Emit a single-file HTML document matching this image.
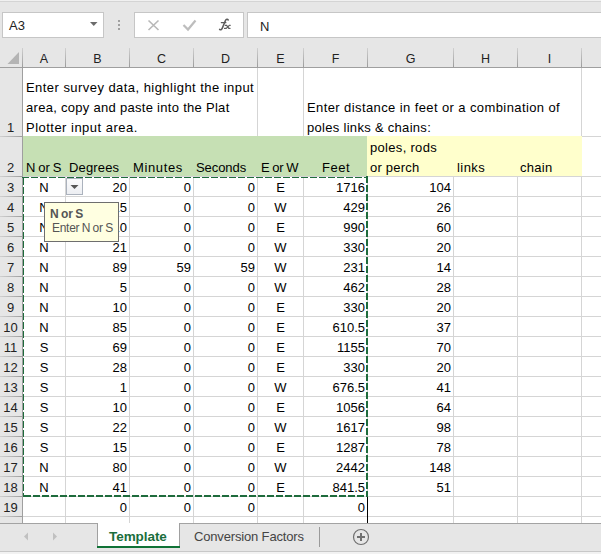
<!DOCTYPE html>
<html><head><meta charset="utf-8"><style>
html,body{margin:0;padding:0;}
body{width:601px;height:554px;position:relative;overflow:hidden;background:#e6e6e6;font-family:"Liberation Sans", sans-serif;}
body>div,body>svg{position:absolute;}
.t{white-space:nowrap;line-height:20px;font-family:"Liberation Sans", sans-serif;}
</style></head><body>
<div style="left:0px;top:0px;width:601px;height:1px;background:#f0f0f0;"></div>
<div style="left:0px;top:1px;width:601px;height:1px;background:#d4d4d4;"></div>
<div style="left:2px;top:12px;width:100px;height:24px;border:1px solid #c6c6c6;background:#fff"></div>
<div class="t" style="left:9px;top:16px;font-size:13px;color:#222;">A3</div>
<svg style="left:80px;top:15px" width="25" height="15"><path d="M10 7 L17.5 7 L13.75 11 Z" fill="#6b6b6b"/></svg>
<div style="left:118px;top:20px;width:2px;height:2px;background:#a0a0a0;"></div>
<div style="left:118px;top:24px;width:2px;height:2px;background:#a0a0a0;"></div>
<div style="left:118px;top:28px;width:2px;height:2px;background:#a0a0a0;"></div>
<div style="left:134px;top:12px;width:108px;height:24px;border:1px solid #c6c6c6;background:#fff"></div>
<svg style="left:0;top:0" width="601" height="60"><path d="M148.5 20.5 L158.5 30 M158.5 20.5 L148.5 30" stroke="#b8b8b8" stroke-width="1.6" fill="none"/><path d="M183.5 25 L188 29.5 L195.5 20.5" stroke="#bdbdbd" stroke-width="2.2" fill="none"/></svg>
<svg style="left:0;top:0" width="601" height="60"><g stroke="#5c5c5c" fill="none" stroke-linecap="round"><path d="M228.2 20 C227.6 19 226.2 19.1 225.4 20.6 L222.2 28.4 C221.6 29.8 220.6 30.1 219.6 29.4" stroke-width="1.5"/><path d="M221.3 22.6 L225.9 22.6" stroke-width="1.2"/><path d="M225.3 25.4 L226.6 25.4 L228.8 28.4 L230 28.4" stroke-width="1.2"/><path d="M230.4 25.3 L229.4 25.3 L226.2 28.4 L224.5 28.4" stroke-width="1.1"/></g></svg>
<div style="left:247px;top:12px;width:400px;height:24px;border:1px solid #c6c6c6;background:#fff"></div>
<div class="t" style="left:260px;top:17px;font-size:13px;color:#222;">N</div>
<div style="left:23px;top:68px;width:578px;height:455px;background:#fff;"></div>
<div style="left:22px;top:48px;width:1px;height:19px;background:linear-gradient(#d0d0d0,#9c9c9c)"></div>
<div style="left:65px;top:48px;width:1px;height:19px;background:linear-gradient(#d0d0d0,#9c9c9c)"></div>
<div style="left:129px;top:48px;width:1px;height:19px;background:linear-gradient(#d0d0d0,#9c9c9c)"></div>
<div style="left:193px;top:48px;width:1px;height:19px;background:linear-gradient(#d0d0d0,#9c9c9c)"></div>
<div style="left:257px;top:48px;width:1px;height:19px;background:linear-gradient(#d0d0d0,#9c9c9c)"></div>
<div style="left:303px;top:48px;width:1px;height:19px;background:linear-gradient(#d0d0d0,#9c9c9c)"></div>
<div style="left:367px;top:48px;width:1px;height:19px;background:linear-gradient(#d0d0d0,#9c9c9c)"></div>
<div style="left:453px;top:48px;width:1px;height:19px;background:linear-gradient(#d0d0d0,#9c9c9c)"></div>
<div style="left:517px;top:48px;width:1px;height:19px;background:linear-gradient(#d0d0d0,#9c9c9c)"></div>
<div style="left:581px;top:48px;width:1px;height:19px;background:linear-gradient(#d0d0d0,#9c9c9c)"></div>
<div style="left:0px;top:67px;width:601px;height:1px;background:#9f9f9f;"></div>
<div style="left:22px;top:67px;width:1px;height:456px;background:#9f9f9f;"></div>
<svg style="left:0;top:44px" width="22" height="22"><path d="M7.5 20 L19 20 L19 8 Z" fill="#b4b4b4"/></svg>
<div class="t" style="left:23px;top:49px;font-size:12.5px;color:#222;width:42px;text-align:center;">A</div>
<div class="t" style="left:66px;top:49px;font-size:12.5px;color:#222;width:63px;text-align:center;">B</div>
<div class="t" style="left:130px;top:49px;font-size:12.5px;color:#222;width:63px;text-align:center;">C</div>
<div class="t" style="left:194px;top:49px;font-size:12.5px;color:#222;width:63px;text-align:center;">D</div>
<div class="t" style="left:258px;top:49px;font-size:12.5px;color:#222;width:45px;text-align:center;">E</div>
<div class="t" style="left:304px;top:49px;font-size:12.5px;color:#222;width:63px;text-align:center;">F</div>
<div class="t" style="left:368px;top:49px;font-size:12.5px;color:#222;width:85px;text-align:center;">G</div>
<div class="t" style="left:454px;top:49px;font-size:12.5px;color:#222;width:63px;text-align:center;">H</div>
<div class="t" style="left:518px;top:49px;font-size:12.5px;color:#222;width:63px;text-align:center;">I</div>
<div class="t" style="left:582px;top:49px;font-size:12.5px;color:#000;"></div>
<div style="left:0;top:136px;width:22px;height:1px;background:linear-gradient(90deg,#d0d0d0,#9e9e9e)"></div>
<div style="left:0;top:176px;width:22px;height:1px;background:linear-gradient(90deg,#d0d0d0,#9e9e9e)"></div>
<div style="left:0;top:196px;width:22px;height:1px;background:linear-gradient(90deg,#d0d0d0,#9e9e9e)"></div>
<div style="left:0;top:216px;width:22px;height:1px;background:linear-gradient(90deg,#d0d0d0,#9e9e9e)"></div>
<div style="left:0;top:236px;width:22px;height:1px;background:linear-gradient(90deg,#d0d0d0,#9e9e9e)"></div>
<div style="left:0;top:256px;width:22px;height:1px;background:linear-gradient(90deg,#d0d0d0,#9e9e9e)"></div>
<div style="left:0;top:276px;width:22px;height:1px;background:linear-gradient(90deg,#d0d0d0,#9e9e9e)"></div>
<div style="left:0;top:296px;width:22px;height:1px;background:linear-gradient(90deg,#d0d0d0,#9e9e9e)"></div>
<div style="left:0;top:316px;width:22px;height:1px;background:linear-gradient(90deg,#d0d0d0,#9e9e9e)"></div>
<div style="left:0;top:336px;width:22px;height:1px;background:linear-gradient(90deg,#d0d0d0,#9e9e9e)"></div>
<div style="left:0;top:356px;width:22px;height:1px;background:linear-gradient(90deg,#d0d0d0,#9e9e9e)"></div>
<div style="left:0;top:376px;width:22px;height:1px;background:linear-gradient(90deg,#d0d0d0,#9e9e9e)"></div>
<div style="left:0;top:396px;width:22px;height:1px;background:linear-gradient(90deg,#d0d0d0,#9e9e9e)"></div>
<div style="left:0;top:416px;width:22px;height:1px;background:linear-gradient(90deg,#d0d0d0,#9e9e9e)"></div>
<div style="left:0;top:436px;width:22px;height:1px;background:linear-gradient(90deg,#d0d0d0,#9e9e9e)"></div>
<div style="left:0;top:456px;width:22px;height:1px;background:linear-gradient(90deg,#d0d0d0,#9e9e9e)"></div>
<div style="left:0;top:476px;width:22px;height:1px;background:linear-gradient(90deg,#d0d0d0,#9e9e9e)"></div>
<div style="left:0;top:496px;width:22px;height:1px;background:linear-gradient(90deg,#d0d0d0,#9e9e9e)"></div>
<div style="left:0;top:516px;width:22px;height:1px;background:linear-gradient(90deg,#d0d0d0,#9e9e9e)"></div>
<div class="t" style="left:0px;top:118px;font-size:13px;color:#222;width:21px;text-align:center;">1</div>
<div class="t" style="left:0px;top:158px;font-size:13px;color:#222;width:21px;text-align:center;">2</div>
<div class="t" style="left:0px;top:178px;font-size:13px;color:#222;width:21px;text-align:center;">3</div>
<div class="t" style="left:0px;top:198px;font-size:13px;color:#222;width:21px;text-align:center;">4</div>
<div class="t" style="left:0px;top:218px;font-size:13px;color:#222;width:21px;text-align:center;">5</div>
<div class="t" style="left:0px;top:238px;font-size:13px;color:#222;width:21px;text-align:center;">6</div>
<div class="t" style="left:0px;top:258px;font-size:13px;color:#222;width:21px;text-align:center;">7</div>
<div class="t" style="left:0px;top:278px;font-size:13px;color:#222;width:21px;text-align:center;">8</div>
<div class="t" style="left:0px;top:298px;font-size:13px;color:#222;width:21px;text-align:center;">9</div>
<div class="t" style="left:0px;top:318px;font-size:13px;color:#222;width:21px;text-align:center;">10</div>
<div class="t" style="left:0px;top:338px;font-size:13px;color:#222;width:21px;text-align:center;">11</div>
<div class="t" style="left:0px;top:358px;font-size:13px;color:#222;width:21px;text-align:center;">12</div>
<div class="t" style="left:0px;top:378px;font-size:13px;color:#222;width:21px;text-align:center;">13</div>
<div class="t" style="left:0px;top:398px;font-size:13px;color:#222;width:21px;text-align:center;">14</div>
<div class="t" style="left:0px;top:418px;font-size:13px;color:#222;width:21px;text-align:center;">15</div>
<div class="t" style="left:0px;top:438px;font-size:13px;color:#222;width:21px;text-align:center;">16</div>
<div class="t" style="left:0px;top:458px;font-size:13px;color:#222;width:21px;text-align:center;">17</div>
<div class="t" style="left:0px;top:478px;font-size:13px;color:#222;width:21px;text-align:center;">18</div>
<div class="t" style="left:0px;top:498px;font-size:13px;color:#222;width:21px;text-align:center;">19</div>
<div style="left:23px;top:136px;width:578px;height:1px;background:#d5d5d5;"></div>
<div style="left:23px;top:176px;width:578px;height:1px;background:#d5d5d5;"></div>
<div style="left:23px;top:196px;width:578px;height:1px;background:#d5d5d5;"></div>
<div style="left:23px;top:216px;width:578px;height:1px;background:#d5d5d5;"></div>
<div style="left:23px;top:236px;width:578px;height:1px;background:#d5d5d5;"></div>
<div style="left:23px;top:256px;width:578px;height:1px;background:#d5d5d5;"></div>
<div style="left:23px;top:276px;width:578px;height:1px;background:#d5d5d5;"></div>
<div style="left:23px;top:296px;width:578px;height:1px;background:#d5d5d5;"></div>
<div style="left:23px;top:316px;width:578px;height:1px;background:#d5d5d5;"></div>
<div style="left:23px;top:336px;width:578px;height:1px;background:#d5d5d5;"></div>
<div style="left:23px;top:356px;width:578px;height:1px;background:#d5d5d5;"></div>
<div style="left:23px;top:376px;width:578px;height:1px;background:#d5d5d5;"></div>
<div style="left:23px;top:396px;width:578px;height:1px;background:#d5d5d5;"></div>
<div style="left:23px;top:416px;width:578px;height:1px;background:#d5d5d5;"></div>
<div style="left:23px;top:436px;width:578px;height:1px;background:#d5d5d5;"></div>
<div style="left:23px;top:456px;width:578px;height:1px;background:#d5d5d5;"></div>
<div style="left:23px;top:476px;width:578px;height:1px;background:#d5d5d5;"></div>
<div style="left:23px;top:496px;width:578px;height:1px;background:#d5d5d5;"></div>
<div style="left:23px;top:516px;width:578px;height:1px;background:#d5d5d5;"></div>
<div style="left:65px;top:68px;width:1px;height:455px;background:#d5d5d5;"></div>
<div style="left:129px;top:68px;width:1px;height:455px;background:#d5d5d5;"></div>
<div style="left:193px;top:68px;width:1px;height:455px;background:#d5d5d5;"></div>
<div style="left:257px;top:68px;width:1px;height:455px;background:#d5d5d5;"></div>
<div style="left:303px;top:68px;width:1px;height:455px;background:#d5d5d5;"></div>
<div style="left:367px;top:68px;width:1px;height:455px;background:#d5d5d5;"></div>
<div style="left:453px;top:68px;width:1px;height:455px;background:#d5d5d5;"></div>
<div style="left:517px;top:68px;width:1px;height:455px;background:#d5d5d5;"></div>
<div style="left:581px;top:68px;width:1px;height:455px;background:#d5d5d5;"></div>
<div style="left:23px;top:68px;width:234px;height:68px;background:#fff;"></div>
<div style="left:304px;top:68px;width:277px;height:68px;background:#fff;"></div>
<div style="left:23px;top:136px;width:344px;height:40px;background:#c6e0b4;"></div>
<div style="left:367px;top:136px;width:215px;height:40px;background:#ffffcc;"></div>
<div class="t" style="left:26px;top:78px;font-size:13px;color:#000;letter-spacing:0.45px;">Enter survey data, highlight the input</div>
<div class="t" style="left:26px;top:98px;font-size:13px;color:#000;letter-spacing:0.29px;">area, copy and paste into the Plat</div>
<div class="t" style="left:26px;top:118px;font-size:13px;color:#000;letter-spacing:0.48px;">Plotter input area.</div>
<div class="t" style="left:307px;top:98px;font-size:13px;color:#000;letter-spacing:0.4px;">Enter distance in feet or a combination of</div>
<div class="t" style="left:307px;top:118px;font-size:13px;color:#000;letter-spacing:0.3px;">poles links &amp; chains:</div>
<div class="t" style="left:26px;top:158px;font-size:13px;color:#000;letter-spacing:-0.14px;word-spacing:-0.4px;">N or S</div>
<div class="t" style="left:69px;top:158px;font-size:13px;color:#000;letter-spacing:0.15px;">Degrees</div>
<div class="t" style="left:133px;top:158px;font-size:13px;color:#000;letter-spacing:0.63px;">Minutes</div>
<div class="t" style="left:196px;top:158px;font-size:13px;color:#000;letter-spacing:-0.07px;">Seconds</div>
<div class="t" style="left:261px;top:158px;font-size:13px;color:#000;letter-spacing:-0.24px;word-spacing:-0.5px;">E or W</div>
<div class="t" style="left:322px;top:158px;font-size:13px;color:#000;letter-spacing:0.5px;">Feet</div>
<div class="t" style="left:370px;top:138px;font-size:13px;color:#000;letter-spacing:0.31px;">poles, rods</div>
<div class="t" style="left:370px;top:158px;font-size:13px;color:#000;letter-spacing:0.23px;">or perch</div>
<div class="t" style="left:457px;top:158px;font-size:13px;color:#000;letter-spacing:0.45px;">links</div>
<div class="t" style="left:520px;top:158px;font-size:13px;color:#000;letter-spacing:0.28px;">chain</div>
<div class="t" style="left:23px;top:178px;font-size:13px;color:#000;width:42px;text-align:center;">N</div>
<div class="t" style="left:66px;top:178px;font-size:13px;color:#000;width:61px;text-align:right;">20</div>
<div class="t" style="left:130px;top:178px;font-size:13px;color:#000;width:61px;text-align:right;">0</div>
<div class="t" style="left:194px;top:178px;font-size:13px;color:#000;width:61px;text-align:right;">0</div>
<div class="t" style="left:258px;top:178px;font-size:13px;color:#000;width:45px;text-align:center;">E</div>
<div class="t" style="left:304px;top:178px;font-size:13px;color:#000;width:61px;text-align:right;">1716</div>
<div class="t" style="left:368px;top:178px;font-size:13px;color:#000;width:83px;text-align:right;">104</div>
<div class="t" style="left:23px;top:198px;font-size:13px;color:#000;width:42px;text-align:center;">N</div>
<div class="t" style="left:66px;top:198px;font-size:13px;color:#000;width:61px;text-align:right;">15</div>
<div class="t" style="left:130px;top:198px;font-size:13px;color:#000;width:61px;text-align:right;">0</div>
<div class="t" style="left:194px;top:198px;font-size:13px;color:#000;width:61px;text-align:right;">0</div>
<div class="t" style="left:258px;top:198px;font-size:13px;color:#000;width:45px;text-align:center;">W</div>
<div class="t" style="left:304px;top:198px;font-size:13px;color:#000;width:61px;text-align:right;">429</div>
<div class="t" style="left:368px;top:198px;font-size:13px;color:#000;width:83px;text-align:right;">26</div>
<div class="t" style="left:23px;top:218px;font-size:13px;color:#000;width:42px;text-align:center;">N</div>
<div class="t" style="left:66px;top:218px;font-size:13px;color:#000;width:61px;text-align:right;">10</div>
<div class="t" style="left:130px;top:218px;font-size:13px;color:#000;width:61px;text-align:right;">0</div>
<div class="t" style="left:194px;top:218px;font-size:13px;color:#000;width:61px;text-align:right;">0</div>
<div class="t" style="left:258px;top:218px;font-size:13px;color:#000;width:45px;text-align:center;">E</div>
<div class="t" style="left:304px;top:218px;font-size:13px;color:#000;width:61px;text-align:right;">990</div>
<div class="t" style="left:368px;top:218px;font-size:13px;color:#000;width:83px;text-align:right;">60</div>
<div class="t" style="left:23px;top:238px;font-size:13px;color:#000;width:42px;text-align:center;">N</div>
<div class="t" style="left:66px;top:238px;font-size:13px;color:#000;width:61px;text-align:right;">21</div>
<div class="t" style="left:130px;top:238px;font-size:13px;color:#000;width:61px;text-align:right;">0</div>
<div class="t" style="left:194px;top:238px;font-size:13px;color:#000;width:61px;text-align:right;">0</div>
<div class="t" style="left:258px;top:238px;font-size:13px;color:#000;width:45px;text-align:center;">W</div>
<div class="t" style="left:304px;top:238px;font-size:13px;color:#000;width:61px;text-align:right;">330</div>
<div class="t" style="left:368px;top:238px;font-size:13px;color:#000;width:83px;text-align:right;">20</div>
<div class="t" style="left:23px;top:258px;font-size:13px;color:#000;width:42px;text-align:center;">N</div>
<div class="t" style="left:66px;top:258px;font-size:13px;color:#000;width:61px;text-align:right;">89</div>
<div class="t" style="left:130px;top:258px;font-size:13px;color:#000;width:61px;text-align:right;">59</div>
<div class="t" style="left:194px;top:258px;font-size:13px;color:#000;width:61px;text-align:right;">59</div>
<div class="t" style="left:258px;top:258px;font-size:13px;color:#000;width:45px;text-align:center;">W</div>
<div class="t" style="left:304px;top:258px;font-size:13px;color:#000;width:61px;text-align:right;">231</div>
<div class="t" style="left:368px;top:258px;font-size:13px;color:#000;width:83px;text-align:right;">14</div>
<div class="t" style="left:23px;top:278px;font-size:13px;color:#000;width:42px;text-align:center;">N</div>
<div class="t" style="left:66px;top:278px;font-size:13px;color:#000;width:61px;text-align:right;">5</div>
<div class="t" style="left:130px;top:278px;font-size:13px;color:#000;width:61px;text-align:right;">0</div>
<div class="t" style="left:194px;top:278px;font-size:13px;color:#000;width:61px;text-align:right;">0</div>
<div class="t" style="left:258px;top:278px;font-size:13px;color:#000;width:45px;text-align:center;">W</div>
<div class="t" style="left:304px;top:278px;font-size:13px;color:#000;width:61px;text-align:right;">462</div>
<div class="t" style="left:368px;top:278px;font-size:13px;color:#000;width:83px;text-align:right;">28</div>
<div class="t" style="left:23px;top:298px;font-size:13px;color:#000;width:42px;text-align:center;">N</div>
<div class="t" style="left:66px;top:298px;font-size:13px;color:#000;width:61px;text-align:right;">10</div>
<div class="t" style="left:130px;top:298px;font-size:13px;color:#000;width:61px;text-align:right;">0</div>
<div class="t" style="left:194px;top:298px;font-size:13px;color:#000;width:61px;text-align:right;">0</div>
<div class="t" style="left:258px;top:298px;font-size:13px;color:#000;width:45px;text-align:center;">E</div>
<div class="t" style="left:304px;top:298px;font-size:13px;color:#000;width:61px;text-align:right;">330</div>
<div class="t" style="left:368px;top:298px;font-size:13px;color:#000;width:83px;text-align:right;">20</div>
<div class="t" style="left:23px;top:318px;font-size:13px;color:#000;width:42px;text-align:center;">N</div>
<div class="t" style="left:66px;top:318px;font-size:13px;color:#000;width:61px;text-align:right;">85</div>
<div class="t" style="left:130px;top:318px;font-size:13px;color:#000;width:61px;text-align:right;">0</div>
<div class="t" style="left:194px;top:318px;font-size:13px;color:#000;width:61px;text-align:right;">0</div>
<div class="t" style="left:258px;top:318px;font-size:13px;color:#000;width:45px;text-align:center;">E</div>
<div class="t" style="left:304px;top:318px;font-size:13px;color:#000;width:61px;text-align:right;">610.5</div>
<div class="t" style="left:368px;top:318px;font-size:13px;color:#000;width:83px;text-align:right;">37</div>
<div class="t" style="left:23px;top:338px;font-size:13px;color:#000;width:42px;text-align:center;">S</div>
<div class="t" style="left:66px;top:338px;font-size:13px;color:#000;width:61px;text-align:right;">69</div>
<div class="t" style="left:130px;top:338px;font-size:13px;color:#000;width:61px;text-align:right;">0</div>
<div class="t" style="left:194px;top:338px;font-size:13px;color:#000;width:61px;text-align:right;">0</div>
<div class="t" style="left:258px;top:338px;font-size:13px;color:#000;width:45px;text-align:center;">E</div>
<div class="t" style="left:304px;top:338px;font-size:13px;color:#000;width:61px;text-align:right;">1155</div>
<div class="t" style="left:368px;top:338px;font-size:13px;color:#000;width:83px;text-align:right;">70</div>
<div class="t" style="left:23px;top:358px;font-size:13px;color:#000;width:42px;text-align:center;">S</div>
<div class="t" style="left:66px;top:358px;font-size:13px;color:#000;width:61px;text-align:right;">28</div>
<div class="t" style="left:130px;top:358px;font-size:13px;color:#000;width:61px;text-align:right;">0</div>
<div class="t" style="left:194px;top:358px;font-size:13px;color:#000;width:61px;text-align:right;">0</div>
<div class="t" style="left:258px;top:358px;font-size:13px;color:#000;width:45px;text-align:center;">E</div>
<div class="t" style="left:304px;top:358px;font-size:13px;color:#000;width:61px;text-align:right;">330</div>
<div class="t" style="left:368px;top:358px;font-size:13px;color:#000;width:83px;text-align:right;">20</div>
<div class="t" style="left:23px;top:378px;font-size:13px;color:#000;width:42px;text-align:center;">S</div>
<div class="t" style="left:66px;top:378px;font-size:13px;color:#000;width:61px;text-align:right;">1</div>
<div class="t" style="left:130px;top:378px;font-size:13px;color:#000;width:61px;text-align:right;">0</div>
<div class="t" style="left:194px;top:378px;font-size:13px;color:#000;width:61px;text-align:right;">0</div>
<div class="t" style="left:258px;top:378px;font-size:13px;color:#000;width:45px;text-align:center;">W</div>
<div class="t" style="left:304px;top:378px;font-size:13px;color:#000;width:61px;text-align:right;">676.5</div>
<div class="t" style="left:368px;top:378px;font-size:13px;color:#000;width:83px;text-align:right;">41</div>
<div class="t" style="left:23px;top:398px;font-size:13px;color:#000;width:42px;text-align:center;">S</div>
<div class="t" style="left:66px;top:398px;font-size:13px;color:#000;width:61px;text-align:right;">10</div>
<div class="t" style="left:130px;top:398px;font-size:13px;color:#000;width:61px;text-align:right;">0</div>
<div class="t" style="left:194px;top:398px;font-size:13px;color:#000;width:61px;text-align:right;">0</div>
<div class="t" style="left:258px;top:398px;font-size:13px;color:#000;width:45px;text-align:center;">E</div>
<div class="t" style="left:304px;top:398px;font-size:13px;color:#000;width:61px;text-align:right;">1056</div>
<div class="t" style="left:368px;top:398px;font-size:13px;color:#000;width:83px;text-align:right;">64</div>
<div class="t" style="left:23px;top:418px;font-size:13px;color:#000;width:42px;text-align:center;">S</div>
<div class="t" style="left:66px;top:418px;font-size:13px;color:#000;width:61px;text-align:right;">22</div>
<div class="t" style="left:130px;top:418px;font-size:13px;color:#000;width:61px;text-align:right;">0</div>
<div class="t" style="left:194px;top:418px;font-size:13px;color:#000;width:61px;text-align:right;">0</div>
<div class="t" style="left:258px;top:418px;font-size:13px;color:#000;width:45px;text-align:center;">W</div>
<div class="t" style="left:304px;top:418px;font-size:13px;color:#000;width:61px;text-align:right;">1617</div>
<div class="t" style="left:368px;top:418px;font-size:13px;color:#000;width:83px;text-align:right;">98</div>
<div class="t" style="left:23px;top:438px;font-size:13px;color:#000;width:42px;text-align:center;">S</div>
<div class="t" style="left:66px;top:438px;font-size:13px;color:#000;width:61px;text-align:right;">15</div>
<div class="t" style="left:130px;top:438px;font-size:13px;color:#000;width:61px;text-align:right;">0</div>
<div class="t" style="left:194px;top:438px;font-size:13px;color:#000;width:61px;text-align:right;">0</div>
<div class="t" style="left:258px;top:438px;font-size:13px;color:#000;width:45px;text-align:center;">E</div>
<div class="t" style="left:304px;top:438px;font-size:13px;color:#000;width:61px;text-align:right;">1287</div>
<div class="t" style="left:368px;top:438px;font-size:13px;color:#000;width:83px;text-align:right;">78</div>
<div class="t" style="left:23px;top:458px;font-size:13px;color:#000;width:42px;text-align:center;">N</div>
<div class="t" style="left:66px;top:458px;font-size:13px;color:#000;width:61px;text-align:right;">80</div>
<div class="t" style="left:130px;top:458px;font-size:13px;color:#000;width:61px;text-align:right;">0</div>
<div class="t" style="left:194px;top:458px;font-size:13px;color:#000;width:61px;text-align:right;">0</div>
<div class="t" style="left:258px;top:458px;font-size:13px;color:#000;width:45px;text-align:center;">W</div>
<div class="t" style="left:304px;top:458px;font-size:13px;color:#000;width:61px;text-align:right;">2442</div>
<div class="t" style="left:368px;top:458px;font-size:13px;color:#000;width:83px;text-align:right;">148</div>
<div class="t" style="left:23px;top:478px;font-size:13px;color:#000;width:42px;text-align:center;">N</div>
<div class="t" style="left:66px;top:478px;font-size:13px;color:#000;width:61px;text-align:right;">41</div>
<div class="t" style="left:130px;top:478px;font-size:13px;color:#000;width:61px;text-align:right;">0</div>
<div class="t" style="left:194px;top:478px;font-size:13px;color:#000;width:61px;text-align:right;">0</div>
<div class="t" style="left:258px;top:478px;font-size:13px;color:#000;width:45px;text-align:center;">E</div>
<div class="t" style="left:304px;top:478px;font-size:13px;color:#000;width:61px;text-align:right;">841.5</div>
<div class="t" style="left:368px;top:478px;font-size:13px;color:#000;width:83px;text-align:right;">51</div>
<div class="t" style="left:66px;top:498px;font-size:13px;color:#000;width:61px;text-align:right;">0</div>
<div class="t" style="left:130px;top:498px;font-size:13px;color:#000;width:61px;text-align:right;">0</div>
<div class="t" style="left:194px;top:498px;font-size:13px;color:#000;width:61px;text-align:right;">0</div>
<div class="t" style="left:304px;top:498px;font-size:13px;color:#000;width:61px;text-align:right;">0</div>
<div style="left:367px;top:496px;width:1px;height:27px;background:#000;"></div>
<svg style="left:0;top:0" width="601" height="554"><line x1="22" y1="177.5" x2="368" y2="177.5" stroke="#1e6b3c" stroke-width="1" stroke-dasharray="7 2"/><line x1="23.5" y1="178" x2="23.5" y2="497" stroke="#1e6b3c" stroke-width="1" stroke-dasharray="7 2"/><line x1="367" y1="176" x2="367" y2="497" stroke="#1e6b3c" stroke-width="2" stroke-dasharray="7 2"/><line x1="24" y1="496" x2="368" y2="496" stroke="#1e6b3c" stroke-width="2" stroke-dasharray="7 2"/></svg>
<div style="left:66px;top:178px;width:15px;height:15px;border:1px solid #abb2bd;background:linear-gradient(#fbfbfc,#eceef2)"></div>
<svg style="left:60px;top:180px" width="30" height="15"><path d="M10.5 5 L18.5 5 L14.5 9 Z" fill="#555"/></svg>
<div style="left:44px;top:202px;width:73px;height:38px;border:1px solid #6e6e6e;background:#ffffe1"></div>
<div class="t" style="left:50px;top:204px;font-size:12px;color:#555;letter-spacing:-0.2px;font-weight:bold;word-spacing:-0.5px;">N or S</div>
<div class="t" style="left:52px;top:218px;font-size:12px;color:#555;letter-spacing:-0.28px;word-spacing:-0.6px;">Enter N or S</div>
<div style="left:0px;top:523px;width:601px;height:28px;background:#e6e6e6;"></div>
<div style="left:0px;top:523px;width:601px;height:1px;background:#a3a3a3;"></div>
<div style="left:0px;top:551px;width:601px;height:1px;background:#c8c8c8;"></div>
<div style="left:0px;top:552px;width:601px;height:2px;background:#f2f2f2;"></div>
<svg style="left:0;top:523px" width="80" height="28"><path d="M28 9.5 L24 13.5 L28 17.5 Z" fill="#c0c0c0"/><path d="M53 9.5 L57 13.5 L53 17.5 Z" fill="#c0c0c0"/></svg>
<div style="left:97px;top:523px;width:83px;height:24px;background:#fff;"></div>
<div style="left:97px;top:523px;width:1px;height:24px;background:#a0a0a0;"></div>
<div style="left:179px;top:523px;width:1px;height:24px;background:#a0a0a0;"></div>
<div style="left:97px;top:546px;width:83px;height:2px;background:#107236;"></div>
<div class="t" style="left:109px;top:527px;font-size:13.5px;color:#1a6e3c;letter-spacing:-0.06px;font-weight:bold;">Template</div>
<div class="t" style="left:194px;top:527px;font-size:13px;color:#444;letter-spacing:-0.16px;">Conversion Factors</div>
<div style="left:319px;top:527px;width:1px;height:20px;background:#9a9a9a;"></div>
<svg style="left:340px;top:523px" width="40" height="28"><circle cx="21" cy="14" r="7.5" stroke="#707070" stroke-width="1.2" fill="none"/><rect x="17" y="13" width="8" height="2" fill="#707070"/><rect x="20" y="10" width="2" height="8" fill="#707070"/></svg>
</body></html>
